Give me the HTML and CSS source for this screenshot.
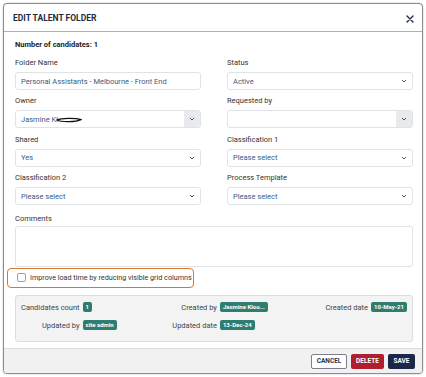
FILE: index.html
```html
<!DOCTYPE html>
<html>
<head>
<meta charset="utf-8">
<link rel="stylesheet" href="styles.css">
</head>
<body>
<div class="modal">
  <div class="modal-header">
    <span class="title">EDIT TALENT FOLDER</span>
    <svg class="close" width="8" height="8" viewBox="0 0 8 8"><path d="M1 1L7 7M7 1L1 7" stroke="#1f2b45" stroke-width="1.4" stroke-linecap="round"/></svg>
  </div>
  <div class="modal-body">
    <div class="count">Number of candidates: 1</div>
    <div class="grid">
      <div class="field">
        <label class="lbl">Folder Name</label>
        <div class="input">Personal Assistants - Melbourne - Front End</div>
      </div>
      <div class="field">
        <label class="lbl">Status</label>
        <div class="input select">Active<span class="chev"><svg width="6" height="4" viewBox="0 0 6 4"><path d="M1 1L3 3L5 1" stroke="#555" stroke-width="1" fill="none"/></svg></span></div>
      </div>
      <div class="field">
        <label class="lbl">Owner</label>
        <div class="input combo">Jasmine Kl<svg class="scribble" width="26" height="6" viewBox="0 0 26 6"><path d="M1 3C5 0.8 20 0.8 25 2.6C20 5.2 5 5.2 1 3Z" stroke="#111" stroke-width="1.2" fill="none"/></svg><span class="addon"><svg width="6" height="4" viewBox="0 0 6 4"><path d="M1 1L3 3L5 1" stroke="#555" stroke-width="1" fill="none"/></svg></span></div>
      </div>
      <div class="field">
        <label class="lbl">Requested by</label>
        <div class="input combo"><span class="addon"><svg width="6" height="4" viewBox="0 0 6 4"><path d="M1 1L3 3L5 1" stroke="#555" stroke-width="1" fill="none"/></svg></span></div>
      </div>
      <div class="field">
        <label class="lbl">Shared</label>
        <div class="input select">Yes<span class="chev"><svg width="6" height="4" viewBox="0 0 6 4"><path d="M1 1L3 3L5 1" stroke="#555" stroke-width="1" fill="none"/></svg></span></div>
      </div>
      <div class="field">
        <label class="lbl">Classification 1</label>
        <div class="input select">Please select<span class="chev"><svg width="6" height="4" viewBox="0 0 6 4"><path d="M1 1L3 3L5 1" stroke="#555" stroke-width="1" fill="none"/></svg></span></div>
      </div>
      <div class="field">
        <label class="lbl">Classification 2</label>
        <div class="input select">Please select<span class="chev"><svg width="6" height="4" viewBox="0 0 6 4"><path d="M1 1L3 3L5 1" stroke="#555" stroke-width="1" fill="none"/></svg></span></div>
      </div>
      <div class="field">
        <label class="lbl">Process Template</label>
        <div class="input select">Please select<span class="chev"><svg width="6" height="4" viewBox="0 0 6 4"><path d="M1 1L3 3L5 1" stroke="#555" stroke-width="1" fill="none"/></svg></span></div>
      </div>
      <div class="field wide">
        <label class="lbl lbl-tight">Comments</label>
        <div class="textarea"></div>
      </div>
    </div>
    <div class="check-box">
      <span class="checkbox"></span>
      <span class="check-label">Improve load time by reducing visible grid columns</span>
    </div>
    <div class="info">
      <span class="ilbl">Candidates count</span><span class="ival"><span class="badge">1</span></span>
      <span class="ilbl">Created by</span><span class="ival"><span class="badge">Jasmine Kloo...</span></span>
      <span class="ilbl">Created date</span><span class="ival"><span class="badge">10-May-21</span></span>
      <span class="ilbl">Updated by</span><span class="ival"><span class="badge">site admin</span></span>
      <span class="ilbl">Updated date</span><span class="ival"><span class="badge">13-Dec-24</span></span>
    </div>
  </div>
  <div class="modal-footer">
    <button class="btn cancel">CANCEL</button>
    <button class="btn delete">DELETE</button>
    <button class="btn save">SAVE</button>
  </div>
</div>
</body>
</html>
```
FILE: styles.css
```css
html, body {
  margin: 0;
  padding: 0;
  background: #ffffff;
}
body {
  font-family: Roboto, "Liberation Sans", sans-serif;
  color: #333;
  padding: 3px 3px 3px 3px;
  width: 426px;
  height: 377px;
  box-sizing: border-box;
}
.modal {
  width: 420px;
  height: 371px;
  box-sizing: border-box;
  border: 1.5px solid #8c8c8c;
  border-radius: 4px;
  background: #fff;
  display: flex;
  flex-direction: column;
  overflow: hidden;
  box-shadow: 0 0 2px rgba(0,0,0,0.25);
}
.modal-header {
  height: 27px;
  flex: none;
  display: flex;
  align-items: center;
  justify-content: space-between;
  padding: 0 8px 0 9px;
  border-bottom: 1.5px solid #9fd134;
}
.title {
  font-size: 8.5px;
  font-weight: 700;
  color: #1f2b3d;
}
.close {
  display: block;
  margin-top: 2px;
}
.modal-body {
  flex: 1;
  padding: 8px 9px 0 11px;
}
.count {
  font-size: 7.5px;
  font-weight: 700;
  line-height: 10px;
  color: #222;
  margin-bottom: 8px;
}
.grid {
  display: grid;
  grid-template-columns: 1fr 1fr;
  column-gap: 26px;
  row-gap: 6.4px;
}
.field {
  display: flex;
  flex-direction: column;
}
.field.wide {
  grid-column: 1 / 3;
  margin-top: 2px;
}
.lbl {
  font-size: 7.5px;
  line-height: 10px;
  color: #333;
  margin-bottom: 4px;
}
.lbl-tight {
  margin-bottom: 2px;
}
.input {
  height: 18px;
  box-sizing: border-box;
  border: 1px solid #dfe2e7;
  border-radius: 3px;
  font-size: 7.5px;
  color: #3c5a80;
  display: flex;
  align-items: center;
  padding-left: 5px;
}
.chev {
  margin-left: auto;
  width: 16px;
  display: flex;
  justify-content: center;
  align-items: center;
}
.combo .addon {
  margin-left: auto;
  width: 16px;
  align-self: stretch;
  background: #e8eaee;
  display: flex;
  justify-content: center;
  align-items: center;
  border-radius: 0 2px 2px 0;
}
.scribble {
  margin-left: -2px;
  margin-top: 2px;
}
.textarea {
  height: 41px;
  box-sizing: border-box;
  border: 1px solid #dfe2e7;
  border-radius: 3px;
}
.check-box {
  margin: 1px 0 0 -8px;
  width: 187px;
  height: 20px;
  box-sizing: border-box;
  border: 1.3px solid #d9782b;
  border-radius: 4px;
  display: flex;
  align-items: center;
  padding-left: 9px;
  gap: 4px;
  white-space: nowrap;
}
.checkbox {
  flex: none;
  width: 7px;
  height: 7px;
  border: 1px solid #9aa0a8;
  border-radius: 2px;
  background: #fff;
}
.check-label {
  font-size: 7.2px;
  color: #333;
  white-space: nowrap;
}
.info {
  margin-top: 7px;
  height: 47px;
  box-sizing: border-box;
  background: #f3f3f3;
  border: 1px solid #dadde2;
  border-radius: 3px;
  padding: 6px 5px 0 5px;
  display: grid;
  grid-template-columns: auto auto 1fr auto 1fr auto;
  grid-auto-rows: 11px;
  column-gap: 3px;
  row-gap: 7px;
  align-items: center;
}
.ilbl {
  font-size: 7.5px;
  color: #444;
  text-align: right;
  white-space: nowrap;
}
.ival {
  display: flex;
}
.badge {
  background: #2f7d70;
  color: #fff;
  font-size: 6px;
  font-weight: 700;
  line-height: 10px;
  padding: 0 3px;
  border-radius: 2px;
  white-space: nowrap;
}
.modal-footer {
  flex: none;
  height: 24px;
  background: #f1f1f1;
  border-top: 1px solid #dcdcdc;
  display: flex;
  justify-content: flex-end;
  align-items: center;
  gap: 4px;
  padding-right: 7px;
}
.btn {
  height: 15px;
  font-family: Roboto, "Liberation Sans", sans-serif;
  font-size: 6.5px;
  font-weight: 700;
  border-radius: 2px;
  padding: 0;
  border: 1px solid transparent;
}
.cancel {
  width: 36px;
  background: #fff;
  color: #2b3552;
  border-color: #7a8090;
}
.delete {
  width: 33px;
  background: #b01f2f;
  color: #fff;
}
.save {
  width: 27px;
  background: #1c2747;
  color: #fff;
}
```
